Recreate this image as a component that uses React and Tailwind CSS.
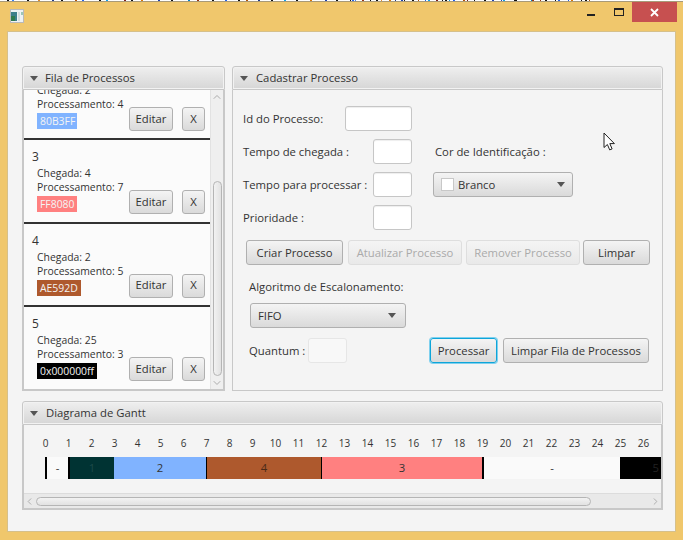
import React from 'react';
import { ChevronLeft, ChevronRight, ChevronUp, ChevronDown } from 'lucide-react';

const specks = [
  [7, '#111'], [12, '#3b82f6'], [27, '#111'], [38, '#e08a2c'], [52, '#1e3a8a'], [61, '#111'], [75, '#b45309'], [82, '#2563eb'],
  [99, '#111'], [106, '#0ea5e9'], [124, '#7f1d1d'], [131, '#111'], [141, '#d97706'], [158, '#1e40af'], [171, '#111'], [188, '#0284c7'],
  [197, '#9a3412'], [212, '#111'], [225, '#2563eb'], [238, '#111'], [246, '#b45309'], [258, '#1e3a8a'], [271, '#111'], [284, '#0ea5e9'],
  [296, '#111'], [310, '#d97706'], [325, '#1e40af'], [336, '#111'], [352, '#2563eb'], [362, '#9a3412'], [376, '#111'], [389, '#d97706'],
  [401, '#1e40af'], [412, '#111'], [428, '#0ea5e9'], [436, '#7f1d1d'], [445, '#111'], [453, '#2563eb'], [463, '#b45309'], [484, '#111'],
  [492, '#1e40af'], [503, '#0ea5e9'], [515, '#111'], [532, '#9a3412'], [545, '#111'], [558, '#2563eb'], [571, '#d97706'], [585, '#111'],
];

const btn = 'h-[25px] pt-[2px] flex items-center justify-center rounded-[3px] border border-[#b0b0b0] bg-gradient-to-b from-[#f4f4f4] to-[#dadada] text-[11.3px] text-[#333]';
const off = 'h-[25px] pt-[2px] flex items-center justify-center rounded-[3px] border border-[#dedede] bg-gradient-to-b from-[#f4f4f4] to-[#e9e9e9] text-[11.3px] text-[#aaa]';
const field = 'h-[25px] rounded-[3px] border border-[#c6c6c6] bg-white shadow-[inset_0_1px_1px_#eee]';
const arrow = 'w-0 h-0 border-l-[4.5px] border-r-[4.5px] border-t-[5px] border-l-transparent border-r-transparent border-t-[#555]';

const processos = [
  { id: 3, chegada: 4, proc: 7, cor: 'FF8080', bg: 'bg-[#FF8080]', w: 'w-[40px]' },
  { id: 4, chegada: 2, proc: 5, cor: 'AE592D', bg: 'bg-[#AE592D]', w: 'w-[44px]' },
  { id: 5, chegada: 25, proc: 3, cor: '0x000000ff', bg: 'bg-black', w: 'w-[60px]' },
];

const segmentos = [
  { label: '-', cls: 'w-[23px] bg-[#fafafa] border-l-2 border-black text-[#333] justify-center' },
  { label: '1', cls: 'w-[46px] bg-[#003333] border-l-2 border-black text-[#1d4a4a] justify-center' },
  { label: '2', cls: 'w-[92px] bg-[#80B3FF] text-[#333] justify-center' },
  { label: '4', cls: 'w-[115px] bg-[#AE592D] border-l border-black text-[#4a2a18] justify-center' },
  { label: '3', cls: 'w-[161px] bg-[#FF8080] border-l border-black text-[#333] justify-center' },
  { label: '-', cls: 'w-[138px] bg-[#fafafa] border-l-2 border-black text-[#333] justify-center' },
  { label: '5', cls: 'w-[41px] bg-black justify-end pr-[2px] text-[#222]' },
];

const PanelHeader = ({ title, ml }) => (
  <div className="h-[24px] shrink-0 flex items-center rounded-t-[3px] border border-[#c8c8c8] bg-gradient-to-b from-[#efefef] to-[#d6d6d6] pl-[7px] shadow-[inset_0_0_0_1px_#f2f2f2] text-[11.3px] text-[#333]">
    <span className={arrow} />
    <span className={ml}>{title}</span>
  </div>
);

const Info = ({ chegada, proc }) => (
  <>
    <p className="h-[14px] leading-[14px] whitespace-nowrap">Chegada: {chegada}</p>
    <p className="h-[14px] leading-[14px] whitespace-nowrap">Processamento: {proc}</p>
  </>
);

const Actions = () => (
  <div className="flex gap-[9px]">
    <button className={`${btn} w-[44px] !h-[24px] !pt-0`}>Editar</button>
    <button className={`${btn} w-[23px] !h-[24px] !pt-0`}>X</button>
  </div>
);

const App = () => {
  return (
    <div className="w-[683px] h-[540px] flex flex-col bg-[#f0c76c] font-['Open_Sans','Noto_Sans',sans-serif] text-[#333] overflow-hidden">
      <svg width="683" height="2" className="block shrink-0">
        <rect width="683" height="1" fill="#fff" />
        <rect y="1" width="683" height="1" fill="#a89a78" />
        {specks.map(([x, c]) => (
          <g key={x}>
            <rect x={x} width="2" height="1" fill={c} />
            <rect x={x + 343 > 590 ? x : x + 343} width="1" height="1" fill={c} />
          </g>
        ))}
      </svg>

      {/* barra de titulo */}
      <div className="h-[29px] shrink-0 flex items-start pl-[10px]">
        <svg width="14" height="14" viewBox="0 0 14 14" className="mt-[7px]">
          <rect x="0.5" y="0.5" width="13" height="13" fill="#eef2f5" stroke="#b9b9b9" />
          <rect x="1" y="3" width="6" height="9" fill="#3c7f8c" />
          <rect x="1" y="7" width="4" height="5" fill="#2f7a4f" />
          <rect x="8" y="3" width="2" height="9" fill="#d5dde0" />
          <rect x="11" y="3" width="2" height="3" fill="#9dc7b8" />
        </svg>
        <div className="ml-auto flex items-start">
          <div className="w-[8px] h-[2px] bg-[#222] mt-[12px] mr-[19px]" />
          <div className="w-[10px] h-[8px] border border-t-2 border-[#222] mt-[6px] mr-[8px]" />
          <div className="w-[45px] h-[20px] bg-[#c75050] flex items-center justify-center mr-[6px]">
            <svg width="9" height="9" viewBox="0 0 9 9">
              <path d="M1 1l7 7M8 1l-7 7" stroke="#fff" strokeWidth="1.8" />
            </svg>
          </div>
        </div>
      </div>

      {/* janela */}
      <div className="relative mx-[7px] h-[501px] shrink-0 border border-[#d6c08a] bg-[#f4f4f4] pt-[34px] pl-[14px] pr-[12px]">
        <div className="flex gap-[7px]">
          {/* fila */}
          <section className="w-[203px] h-[325px] flex flex-col">
            <PanelHeader title="Fila de Processos" ml="ml-[7px]" />
            <div className="flex-1 min-h-0 flex border-x-2 border-b-2 border-[#c8c8c8] bg-[#fbfbfb] text-[10.4px]">
              <div className="w-[186px] shrink-0 overflow-hidden">
                <div className="h-[50px] border-b-2 border-[#333] pl-[13px] flex justify-between">
                  <div className="-mt-[7px]">
                    <Info chegada={2} proc={4} />
                    <div className="w-[40px] h-[16px] mt-[2px] bg-[#80B3FF] text-[#f4f4f4] pl-[3px] leading-[16px]">80B3FF</div>
                  </div>
                  <div className="pt-[17px] pr-[5px]"><Actions /></div>
                </div>
                {processos.map((p, i) => (
                  <div key={p.id} className={`h-[83.5px] flex justify-between ${i < 2 ? 'border-b-2 border-[#333]' : ''}`}>
                    <div className="pl-[8px] pt-[8px]">
                      <p className="h-[18px] leading-[18px] text-[12px]">{p.id}</p>
                      <div className="pl-[5px]">
                        <Info chegada={p.chegada} proc={p.proc} />
                        <div className={`${p.w} ${p.bg} h-[16px] mt-[2px] text-[#f4f4f4] pl-[3px] leading-[16px] whitespace-nowrap`}>{p.cor}</div>
                      </div>
                    </div>
                    <div className="pt-[50px] pr-[5px]"><Actions /></div>
                  </div>
                ))}
              </div>
              <div className="w-[13px] shrink-0 flex flex-col items-center bg-[#efefef] border-l border-[#e2e2e2]">
                <ChevronUp size={12} className="text-[#aaa] mt-[1px]" />
                <div className="w-[9px] h-[196px] mt-[78px] rounded-[5px] border border-[#b5b5b5] bg-gradient-to-r from-[#f2f2f2] to-[#e2e2e2]" />
                <ChevronDown size={12} className="text-[#aaa] mt-[1px]" />
              </div>
            </div>
          </section>

          {/* cadastro */}
          <section className="w-[431px] h-[325px] flex flex-col">
            <PanelHeader title="Cadastrar Processo" ml="ml-[8px]" />
            <div className="flex-1 border-x border-b border-[#c8c8c8] pt-[16px] pl-[10px] text-[11.3px]">
              <div className="flex">
                <div className="w-[169px] flex flex-col gap-[8px]">
                  <div className="flex items-center justify-between">
                    <span className="pt-[2px]">Id do Processo:</span>
                    <div className={`${field} w-[67px]`} />
                  </div>
                  <div className="flex items-center justify-between">
                    <span className="pt-[2px]">Tempo de chegada :</span>
                    <div className={`${field} w-[39px]`} />
                  </div>
                  <div className="flex items-center justify-between">
                    <span className="pt-[2px] whitespace-nowrap">Tempo para processar :</span>
                    <div className={`${field} w-[39px]`} />
                  </div>
                  <div className="flex items-center justify-between">
                    <span className="pt-[2px]">Prioridade :</span>
                    <div className={`${field} w-[39px]`} />
                  </div>
                </div>
                <div className="ml-[21px] pt-[33px]">
                  <p className="h-[25px] leading-[25px] ml-[2px]">Cor de Identificação :</p>
                  <div className={`${btn} w-[140px] mt-[8px] !justify-start pl-[7px] pr-[7px] !pt-0`}>
                    <span className="w-[13px] h-[13px] bg-white border border-[#c8c8c8]" />
                    <span className="ml-[4px] pt-[2px]">Branco</span>
                    <span className={`${arrow} ml-auto`} />
                  </div>
                </div>
              </div>

              <div className="flex mt-[10px] ml-[3px]">
                <button className={`${btn} w-[97px]`}>Criar Processo</button>
                <button className={`${off} w-[114px] ml-[5px]`}>Atualizar Processo</button>
                <button className={`${off} w-[114px] ml-[4px]`}>Remover Processo</button>
                <button className={`${btn} w-[67px] ml-[3px]`}>Limpar</button>
              </div>

              <p className="mt-[14px] ml-[6px] h-[16px] leading-[16px]">Algoritmo de Escalonamento:</p>
              <div className={`${btn} w-[156px] mt-[8px] ml-[7px] !justify-between pl-[7px] pr-[9px] !pt-0`}>
                <span className="pt-[2px]">FIFO</span>
                <span className={arrow} />
              </div>

              <div className="flex items-center mt-[10px] ml-[6px]">
                <span className="w-[56px] pt-[2px] whitespace-nowrap">Quantum :</span>
                <div className="w-[39px] h-[25px] ml-[3px] rounded-[3px] border border-[#e6e6e6] bg-[#f8f8f8]" />
                <button className={`${btn} w-[67px] ml-[83px] !border-[#0ea5d9] shadow-[0_0_0_1px_#7fd0ee]`}>Processar</button>
                <button className={`${btn} w-[146px] ml-[6px]`}>Limpar Fila de Processos</button>
              </div>
            </div>
          </section>
        </div>

        {/* gantt */}
        <section className="w-[641px] h-[109px] mt-[10px] flex flex-col">
          <PanelHeader title="Diagrama de Gantt" ml="ml-[8px]" />
          <div className="flex-1 min-h-0 flex flex-col border-x-2 border-b-2 border-[#c8c8c8] text-[10px]">
            <div className="flex-1 overflow-hidden pl-[10px]">
              <div className="flex h-[32px] items-center pt-[5px]">
                {Array.from({ length: 27 }, (_, i) => (
                  <span key={i} className="w-[23px] shrink-0 text-center">{i}</span>
                ))}
              </div>
              <div className="flex h-[22px] ml-[11px] text-[11.3px]">
                {segmentos.map((s, i) => (
                  <div key={i} className={`${s.cls} shrink-0 box-border flex items-center`}>{s.label}</div>
                ))}
              </div>
            </div>
            <div className="h-[15px] shrink-0 flex items-center bg-[#e9e9e9] border-t border-[#dcdcdc]">
              <ChevronLeft size={11} className="text-[#aaa]" />
              <div className="w-[555px] h-[9px] ml-[1px] rounded-[5px] border border-[#b5b5b5] bg-gradient-to-b from-[#f2f2f2] to-[#e2e2e2]" />
              <ChevronRight size={11} className="text-[#aaa] ml-auto" />
            </div>
          </div>
        </section>

        {/* cursor do mouse */}
        <svg width="13" height="20" viewBox="0 0 13 20" className="absolute left-[595px] top-[100px]">
          <path d="M1 1v14.5l3.4-3 2.3 5.4 2.4-1-2.3-5.3h4.6z" fill="#fff" stroke="#222" strokeWidth="1" />
        </svg>
      </div>
    </div>
  );
};

export default App;
